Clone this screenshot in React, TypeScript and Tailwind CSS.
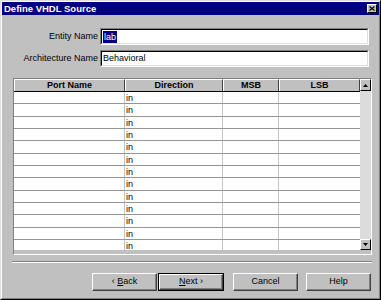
import React from "react";

const rows = Array.from({ length: 13 });

function WinButton({ children, isDefault = false, className = "" }: { children: React.ReactNode; isDefault?: boolean; className?: string }) {
  return (
    <div className={`h-[18px] ${isDefault ? "border border-black" : ""} ${className}`}>
      <div className="flex h-full items-center justify-center border-t border-l border-white border-r border-b border-r-[#404040] border-b-[#404040] bg-[#c0c0c0] shadow-[inset_-1px_-1px_0_#808080]">
        <span className="text-[9px] text-black">{children}</span>
      </div>
    </div>
  );
}

export default function App() {
  return (
    <div className="h-[300px] w-[381px] border border-t-[#dfdfdf] border-l-[#dfdfdf] border-r-black border-b-black bg-[#c0c0c0] font-['Liberation_Sans',Arial,sans-serif]">
      <div className="h-full border border-t-white border-l-white border-r-[#808080] border-b-[#808080]">
        {/* title bar */}
        <div className="flex h-[13px] items-center justify-between bg-[#000080] pl-[2px] pr-[2px]">
          <span className="text-[9.5px] font-bold leading-none text-white">Define VHDL Source</span>
          <div className="flex h-[9px] w-[10px] items-center justify-center border-t border-l border-white border-r border-b border-r-black border-b-black bg-[#c0c0c0]">
            <svg width="6" height="5" viewBox="0 0 6 5">
              <path d="M0.5 0.5 L5.5 4.5 M5.5 0.5 L0.5 4.5" stroke="black" strokeWidth="1.2" />
            </svg>
          </div>
        </div>

        {/* name fields */}
        <div className="flex flex-col gap-[5px] pt-[13px]">
          <div className="flex items-center gap-[2px]">
            <label className="w-[96px] text-right text-[9px] text-black">Entity Name</label>
            <div className="h-[17px] w-[269px] border border-t-[#808080] border-l-[#808080] border-r-white border-b-white">
              <div className="flex h-full items-center border border-t-black border-l-black border-r-[#dfdfdf] border-b-[#dfdfdf] bg-white pl-[1px]">
                <span className="bg-[#000080] px-[1px] text-[9px] leading-[12px] text-white">lab</span>
              </div>
            </div>
          </div>
          <div className="flex items-center gap-[2px]">
            <label className="w-[96px] text-right text-[9px] text-black">Architecture Name</label>
            <div className="h-[17px] w-[269px] border border-t-[#808080] border-l-[#808080] border-r-white border-b-white">
              <div className="flex h-full items-center border border-t-black border-l-black border-r-[#dfdfdf] border-b-[#dfdfdf] bg-white pl-[1px]">
                <span className="text-[9px] text-black">Behavioral</span>
              </div>
            </div>
          </div>
        </div>

        {/* port grid */}
        <div className="ml-[11px] mt-[11px] w-[359px] border border-t-[#808080] border-l-[#808080] border-r-white border-b-white">
          <div className="flex bg-[#c0c0c0] pb-[4px]">
            <div className="flex w-[346px] flex-col">
              <div className="flex h-[13px] border-b border-black text-[9px] font-bold text-black">
                <div className="flex w-[111px] items-center justify-center border-t border-l border-t-white border-l-white border-r border-r-[#404040]">Port Name</div>
                <div className="flex w-[98px] items-center justify-center border-t border-l border-t-white border-l-white border-r border-r-[#404040]">Direction</div>
                <div className="flex w-[56px] items-center justify-center border-t border-l border-t-white border-l-white border-r border-r-[#404040]">MSB</div>
                <div className="flex w-[81px] items-center justify-center border-t border-l border-t-white border-l-white border-r border-r-[#404040]">LSB</div>
              </div>
              <div className="h-[158px] overflow-hidden bg-white">
                {rows.map((_, i) => (
                  <div key={i} className="flex h-[12.33px] border-b border-[#969696] text-[9px] leading-[11px] text-black">
                    <div className="w-[111px] border-r border-[#c4c4c4]" />
                    <div className="w-[98px] border-r border-[#c4c4c4] pl-[1px] pt-[1px]">in</div>
                    <div className="w-[56px] border-r border-[#c4c4c4]" />
                    <div className="w-[81px]" />
                  </div>
                ))}
              </div>
            </div>
            {/* scrollbar */}
            <div className="flex w-[11px] flex-col bg-[#dcdcdc]">
              <div className="flex h-[12px] items-center justify-center border-t border-l border-white border-r border-b border-r-black border-b-black bg-[#c0c0c0]">
                <svg width="5" height="3" viewBox="0 0 5 3">
                  <path d="M2.5 0 L5 3 L0 3 Z" fill="black" />
                </svg>
              </div>
              <div className="flex-1" />
              <div className="flex h-[11px] items-center justify-center border-t border-l border-white border-r border-b border-r-black border-b-black bg-[#c0c0c0]">
                <svg width="5" height="3" viewBox="0 0 5 3">
                  <path d="M0 0 L5 0 L2.5 3 Z" fill="black" />
                </svg>
              </div>
            </div>
          </div>
        </div>

        {/* separator */}
        <div className="ml-[10px] mt-[6px] w-[360px] border-t border-b border-t-[#808080] border-b-white" />

        {/* buttons */}
        <div className="mt-[10px] flex pl-[90px]">
          <WinButton className="w-[65px]">
            ‹ <span className="underline">B</span>ack
          </WinButton>
          <WinButton isDefault className="ml-[1px] w-[66px]">
            <span className="underline">N</span>ext ›
          </WinButton>
          <WinButton className="ml-[9px] w-[65px]">Cancel</WinButton>
          <WinButton className="ml-[8px] w-[65px]">Help</WinButton>
        </div>
      </div>
    </div>
  );
}
